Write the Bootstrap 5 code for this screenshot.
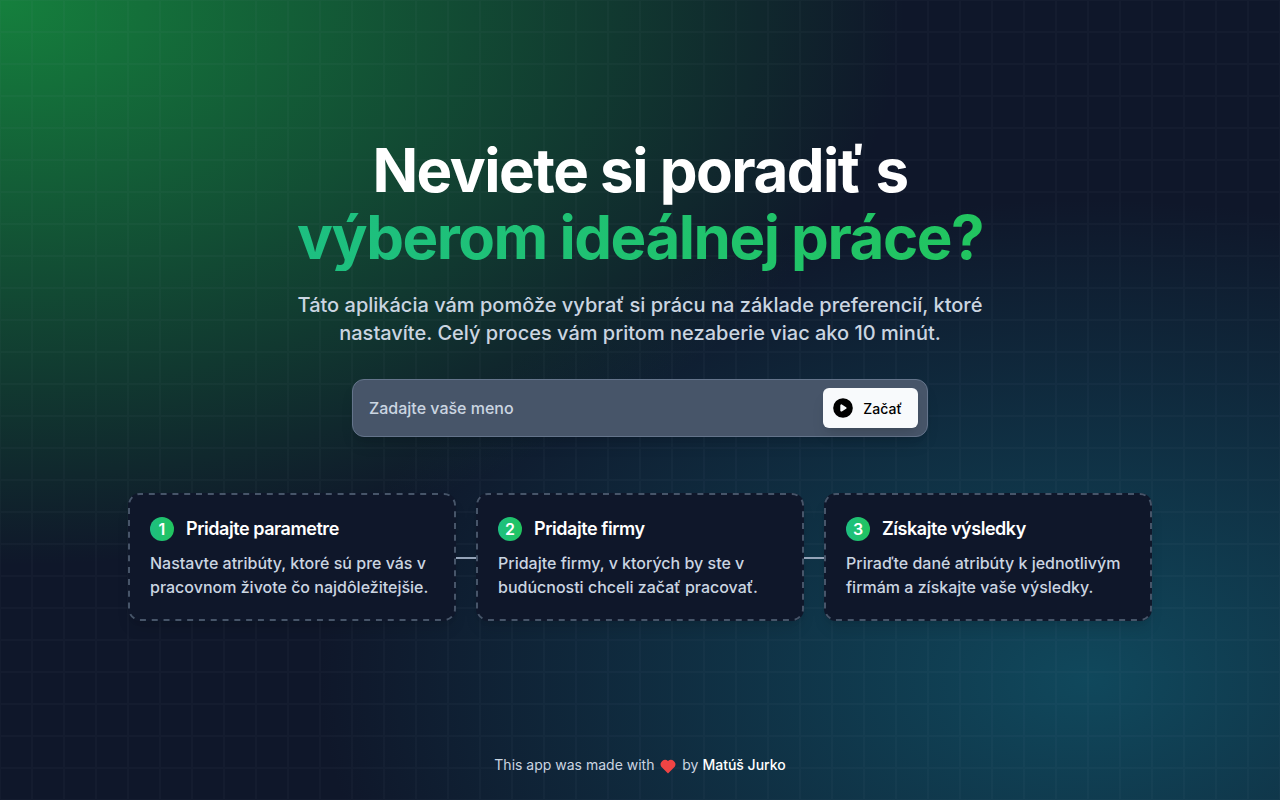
<!DOCTYPE html>
<html lang="sk">
<head>
<meta charset="utf-8">
<meta name="viewport" content="width=device-width, initial-scale=1">
<title>Neviete si poradiť s výberom ideálnej práce?</title>
<link href="https://cdn.jsdelivr.net/npm/bootstrap@5.3.0/dist/css/bootstrap.min.css" rel="stylesheet">
<style>
  body {
    font-family: Inter, "Liberation Sans", sans-serif;
    color: #cbd5e1;
    background:
      url("data:image/svg+xml,%3Csvg xmlns='http://www.w3.org/2000/svg' viewBox='0 0 32 32' width='32' height='32' fill='none' stroke='rgb(148 163 184 / 0.04)' stroke-width='2'%3E%3Cpath d='M0 0H32M0 32H32M0 0V32M32 0V32'/%3E%3C/svg%3E"),
      radial-gradient(at 0% 0%, #15803d 0, transparent 50%),
      radial-gradient(at 85% 85%, #10485c 0, transparent 50%),
      #0f172a;
  }
  main { padding-top: 27px; }
  .soft-shadow { box-shadow: 0 10px 15px -3px rgb(0 0 0 / .1), 0 4px 6px -4px rgb(0 0 0 / .1); }
  .hero { max-width: 736px; }
  .hero-title { font-size: 60px; line-height: 67px; font-weight: 700; letter-spacing: -0.025em; margin-bottom: 20px; }
  .accent-fill { background: linear-gradient(to right, #1dbf82, #22c55e); }
  .accent-text { -webkit-background-clip: text; background-clip: text; color: transparent; }
  .hero-lead { font-size: 20px; line-height: 28px; font-weight: 500; }
  .name-form {
    width: 576px; max-width: 100%; height: 58px; margin-top: 32px; padding: 0 9px 0 16px;
    background: #475569; border: 1px solid #64748b; border-radius: 12px;
  }
  .name-form input { font-size: 16px; font-weight: 500; color: #fff; }
  .name-form input::placeholder { color: #cbd5e1; opacity: 1; }
  .start-btn, .start-btn:hover {
    height: 40px; padding: 0 16px 0 10px; gap: 10px; font-size: 14px; font-weight: 500;
    color: #000; background: #f8fafc; border: 0; border-radius: 6px;
  }
  .steps { max-width: 1024px; margin-top: 56px; display: grid; grid-template-columns: repeat(auto-fit, minmax(280px, 1fr)); gap: 20px; }
  .step { position: relative; padding: 22px; background: #0f172a; border-radius: 12px; }
  .step-outline { position: absolute; top: 0; left: 0; width: 100%; height: 100%; pointer-events: none; }
  .step-outline rect {
    x: 1px; y: 1px; width: calc(100% - 2px); height: calc(100% - 2px); rx: 11px;
    fill: none; stroke: #475569; stroke-width: 2; stroke-dasharray: 6 5.8; stroke-dashoffset: 3;
  }
  .step + .step::before {
    content: ""; position: absolute; right: 100%; top: 50%; width: 20px; height: 2px; background: #94a3b8;
  }
  .step-head { gap: 12px; margin-bottom: 8px; }
  .step-number { width: 24px; height: 24px; font-size: 16px; font-weight: 600; }
  .step-title { font-size: 18px; line-height: 28px; font-weight: 600; letter-spacing: -0.025em; }
  .step-text { font-size: 16px; line-height: 24px; font-weight: 500; }
  .credit { font-size: 14px; line-height: 20px; padding: 24px 0 25px; }
</style>
</head>
<body class="min-vh-100 d-flex flex-column">
<main class="flex-grow-1 d-flex flex-column align-items-center justify-content-center px-3">
  <div class="hero text-center">
    <h1 class="hero-title text-white">Neviete si poradiť s <span class="d-block accent-fill accent-text">výberom ideálnej práce?</span></h1>
    <p class="hero-lead mb-0">Táto aplikácia vám pomôže vybrať si prácu na základe preferencií, ktoré nastavíte. Celý proces vám pritom nezaberie viac ako 10 minút.</p>
  </div>
  <form class="name-form d-flex align-items-center soft-shadow">
    <input type="text" class="flex-grow-1 bg-transparent border-0 p-0" placeholder="Zadajte vaše meno" aria-label="Zadajte vaše meno">
    <button type="button" class="start-btn btn d-flex align-items-center soft-shadow">
      <svg width="20" height="20" viewBox="0 0 20 20" aria-hidden="true"><circle cx="10" cy="10" r="9.800"/><path d="M8.300 7.400v5.200L12.600 10z" fill="#f8fafc" stroke="#f8fafc" stroke-width="2" stroke-linejoin="round"/></svg>
      Začať
    </button>
  </form>
  <div class="steps w-100">
    <section class="step soft-shadow">
      <svg class="step-outline" aria-hidden="true"><rect/></svg>
      <div class="step-head d-flex align-items-center"><span class="step-number accent-fill rounded-circle text-white d-flex align-items-center justify-content-center">1</span><h2 class="step-title text-white mb-0">Pridajte parametre</h2></div>
      <p class="step-text mb-0">Nastavte atribúty, ktoré sú pre vás v pracovnom živote čo najdôležitejšie.</p>
    </section>
    <section class="step soft-shadow">
      <svg class="step-outline" aria-hidden="true"><rect/></svg>
      <div class="step-head d-flex align-items-center"><span class="step-number accent-fill rounded-circle text-white d-flex align-items-center justify-content-center">2</span><h2 class="step-title text-white mb-0">Pridajte firmy</h2></div>
      <p class="step-text mb-0">Pridajte firmy, v ktorých by ste v budúcnosti chceli začať pracovať.</p>
    </section>
    <section class="step soft-shadow">
      <svg class="step-outline" aria-hidden="true"><rect/></svg>
      <div class="step-head d-flex align-items-center"><span class="step-number accent-fill rounded-circle text-white d-flex align-items-center justify-content-center">3</span><h2 class="step-title text-white mb-0">Získajte výsledky</h2></div>
      <p class="step-text mb-0">Priraďte dané atribúty k jednotlivým firmám a získajte vaše výsledky.</p>
    </section>
  </div>
</main>
<footer class="credit text-center">This app was made with
  <svg width="20" height="16" viewBox="0 0 20 16" role="img" aria-label="láskou"><path fill="#ef4444" d="M10 15.500L3.300 8.800A4.500 4.500 0 0 1 10 3a4.500 4.500 0 0 1 6.700 5.800z"/></svg>
  by <a href="#" class="text-white text-decoration-none fw-medium">Matúš Jurko</a></footer>
<script src="https://cdn.jsdelivr.net/npm/bootstrap@5.3.0/dist/js/bootstrap.bundle.min.js"></script>
</body>
</html>
